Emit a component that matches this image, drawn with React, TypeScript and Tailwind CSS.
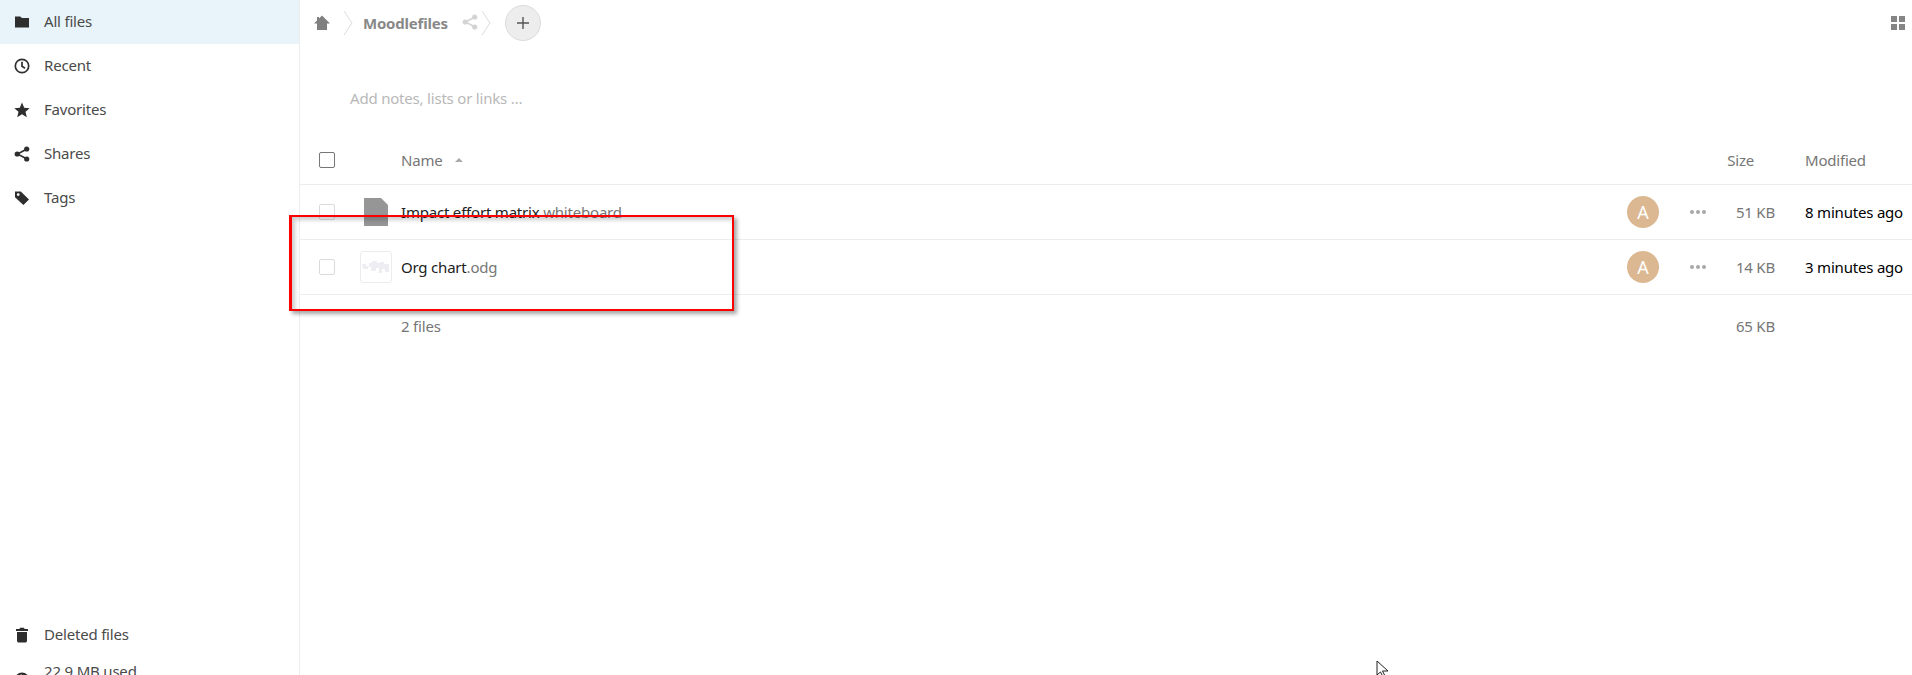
import React from "react";

const FONT = "font-['Noto_Sans','Open_Sans',sans-serif] tracking-[-0.2px]";

const FolderIcon = () => (
  <svg viewBox="0 0 16 16" className="w-4 h-4 fill-[#2e2e2e]">
    <path d="M1 2.5h5.2L8 4h7v9.5H1z" />
  </svg>
);

const ClockIcon = () => (
  <svg viewBox="0 0 16 16" className="w-4 h-4 fill-none stroke-[#2e2e2e]">
    <circle cx="8" cy="8" r="6.7" strokeWidth="1.7" />
    <path d="M8 3.8V8.3L11 10.2" strokeWidth="1.7" />
  </svg>
);

const StarIcon = () => (
  <svg viewBox="0 0 16 16" className="w-4 h-4 fill-[#2e2e2e]">
    <path d="M8 .6l2.2 5.1 5.5.5-4.2 3.6 1.3 5.4L8 12.3l-4.8 2.9 1.3-5.4L.3 6.2l5.5-.5z" />
  </svg>
);

const ShareIcon = ({ color = "#2e2e2e" }: { color?: string }) => (
  <svg viewBox="0 0 16 16" className="w-4 h-4" fill={color} stroke={color}>
    <path d="M12.5 3.2L3.5 8l9 4.8" strokeWidth="1.6" fill="none" />
    <circle cx="12.7" cy="3" r="2.6" stroke="none" />
    <circle cx="3.2" cy="8" r="2.6" stroke="none" />
    <circle cx="12.7" cy="13" r="2.6" stroke="none" />
  </svg>
);

const TagIcon = () => (
  <svg viewBox="0 0 16 16" className="w-4 h-4 fill-[#2e2e2e]">
    <path fillRule="evenodd" d="M1 1.5h5.8L15 9.5 9.4 15 1 7.2zM4.2 3.2a1.4 1.4 0 1 0 0 2.8 1.4 1.4 0 0 0 0-2.8z" />
  </svg>
);

const TrashIcon = () => (
  <svg viewBox="0 0 16 16" className="w-4 h-4 fill-[#2e2e2e]">
    <path d="M6 .8h4l.6 1.2H14v2H2V2h3.4zM3 5h10v9.2L12 15.5H4L3 14.2z" />
  </svg>
);

const QuotaIcon = () => (
  <svg viewBox="0 0 16 16" className="w-4 h-4 fill-none stroke-[#2e2e2e]">
    <circle cx="8" cy="8" r="6.5" strokeWidth="2" />
    <path d="M8 1.5A6.5 6.5 0 0 1 14.5 8H8z" fill="#2e2e2e" strokeWidth="0" />
  </svg>
);

const Crumb = () => (
  <svg viewBox="0 0 10 26" className="w-[10px] h-[26px] fill-none stroke-[#dcdcdc]">
    <path d="M1 1l8 12-8 12" />
  </svg>
);

const NAV = [
  { label: "All files", icon: <FolderIcon />, active: true },
  { label: "Recent", icon: <ClockIcon /> },
  { label: "Favorites", icon: <StarIcon /> },
  { label: "Shares", icon: <ShareIcon /> },
  { label: "Tags", icon: <TagIcon /> },
];

function NavRow({ label, icon, active }: { label: string; icon: React.ReactNode; active?: boolean }) {
  return (
    <div className={`h-11 shrink-0 flex items-center pl-[14px] gap-[14px] text-[15px] text-[#4a4a4a] ${active ? "bg-[#e8f4f9]" : ""}`}>
      {icon}
      <span className="pb-[2px]">{label}</span>
    </div>
  );
}

function FileRow({ name, ext, size, time, thumb }: { name: string; ext: string; size: string; time: string; thumb: React.ReactNode }) {
  return (
    <div className="h-[55px] flex items-center border-b border-[#ededed] text-[15px]">
      <div className="w-[16px] h-[16px] ml-[19px] border border-[#dbdbdb] rounded-[2px] bg-white" />
      <div className="w-[32px] h-[32px] ml-[25px] flex items-center justify-center">{thumb}</div>
      <div className="ml-[9px] flex-1 text-[#222]">
        {name}
        <span className="text-[#767676]">{ext}</span>
      </div>
      <div className="w-[32px] h-[32px] rounded-full bg-[#dcb892] text-white text-[18px] flex items-center justify-center">A</div>
      <div className="ml-[31px] flex gap-[2px]">
        <span className="w-[4px] h-[4px] rounded-full bg-[#a8a8a8]" />
        <span className="w-[4px] h-[4px] rounded-full bg-[#a8a8a8]" />
        <span className="w-[4px] h-[4px] rounded-full bg-[#a8a8a8]" />
      </div>
      <div className="w-[69px] text-right text-[#767676]">{size}</div>
      <div className="w-[137px] pl-[30px] text-black whitespace-nowrap">{time}</div>
    </div>
  );
}

export default function App() {
  return (
    <div className={`relative w-[1912px] h-[675px] overflow-hidden bg-white flex ${FONT}`}>
      {/* Sidebar */}
      <div className="w-[300px] shrink-0 border-r border-[#ededed] flex flex-col">
        {NAV.map((n) => (
          <NavRow key={n.label} {...n} />
        ))}
        <div className="h-[393px] shrink-0" />
        <NavRow label="Deleted files" icon={<TrashIcon />} />
        <div className="h-[44px] shrink-0 flex pl-[14px] gap-[14px] text-[15px] leading-[22px] text-[#4a4a4a] pt-[3px]">
          <div className="pt-[12px]">
            <QuotaIcon />
          </div>
          <span>22.9 MB used</span>
        </div>
      </div>

      {/* Main */}
      <div className="flex-1 flex flex-col">
        <div className="h-[46px] flex items-center pl-[14px]">
          <svg viewBox="0 0 16 16" className="w-4 h-4 fill-[#7f7f7f]">
            <path d="M8 0.5L16 8.5h-3V15H3V8.5H0L3 5.5V2h2v1.5z" />
          </svg>
          <div className="ml-[13px]"><Crumb /></div>
          <span className="ml-[10px] font-bold text-[15px] text-[#888]">Moodlefiles</span>
          <div className="ml-[14px] mb-[2px]"><ShareIcon color="#d4d4d4" /></div>
          <div className="ml-[3px]"><Crumb /></div>
          <div className="ml-[14px] w-[36px] h-[36px] rounded-full bg-[#ededed] border border-[#dbdbdb] flex items-center justify-center">
            <svg viewBox="0 0 12 12" className="w-3 h-3 stroke-[#555] fill-none">
              <path d="M6 0v12M0 6h12" strokeWidth="1.4" />
            </svg>
          </div>
          <div className="ml-auto mr-[7px] grid grid-cols-2 gap-[2px]">
            <span className="w-[6px] h-[6px] bg-[#858585]" />
            <span className="w-[6px] h-[6px] bg-[#858585]" />
            <span className="w-[6px] h-[6px] bg-[#858585]" />
            <span className="w-[6px] h-[6px] bg-[#858585]" />
          </div>
        </div>

        <div className="h-[90px] pl-[50px] pt-[41px] text-[15px] leading-[22px] text-[#b8b8b8]">Add notes, lists or links …</div>

        {/* Table header */}
        <div className="h-[49px] flex items-center border-b border-[#ededed] text-[15px] text-[#767676]">
          <div className="w-[16px] h-[16px] ml-[19px] border border-[#767676] rounded-[2px]" />
          <span className="ml-[66px]">Name</span>
          <span className="ml-[12px] w-0 h-0 border-x-[4px] border-x-transparent border-b-[4px] border-b-[#aaa]" />
          <span className="ml-auto">Size</span>
          <span className="ml-[51px] w-[107px]">Modified</span>
        </div>

        <FileRow
          name="Impact effort matrix"
          ext=" whiteboard"
          size="51 KB"
          time="8 minutes ago"
          thumb={
            <svg viewBox="0 0 24 28" className="w-[24px] h-[28px] fill-[#969696]">
              <path d="M0 0h17l7 7v21H0z" />
            </svg>
          }
        />
        <FileRow
          name="Org chart"
          ext=".odg"
          size="14 KB"
          time="3 minutes ago"
          thumb={
            <div className="w-[32px] h-[32px] border border-[#ededed] rounded-[3px] flex items-center justify-center">
              <svg viewBox="0 0 28 12" className="w-[28px] h-[12px] fill-[#eeeef2]">
                <path d="M0 3h4v2h3V2h3V0h5v2h3V1h4v2h5v8h-4V8h-3v4h-3V7h-3v3H9V6H6v2H1z" />
              </svg>
            </div>
          }
        />

        <div className="h-[62px] flex items-center text-[15px] text-[#767676]">
          <span className="ml-[101px] flex-1">2 files</span>
          <span className="mr-[137px]">65 KB</span>
        </div>
      </div>

      {/* Red annotation box */}
      <div className="absolute left-[289px] top-[215px] w-[445px] h-[96px] border-[2px] border-l-[3px] border-[#ff0000] shadow-[3px_3px_4px_rgba(0,0,0,0.35),inset_3px_3px_4px_rgba(0,0,0,0.2)]" />

      {/* Mouse cursor */}
      <svg viewBox="0 0 14 18" className="absolute left-[1376px] top-[660px] w-[14px] h-[18px] fill-white stroke-[#222]">
        <path d="M1 1v14l3.5-3 2.5 5 2-1-2.5-5H12z" />
      </svg>
    </div>
  );
}
